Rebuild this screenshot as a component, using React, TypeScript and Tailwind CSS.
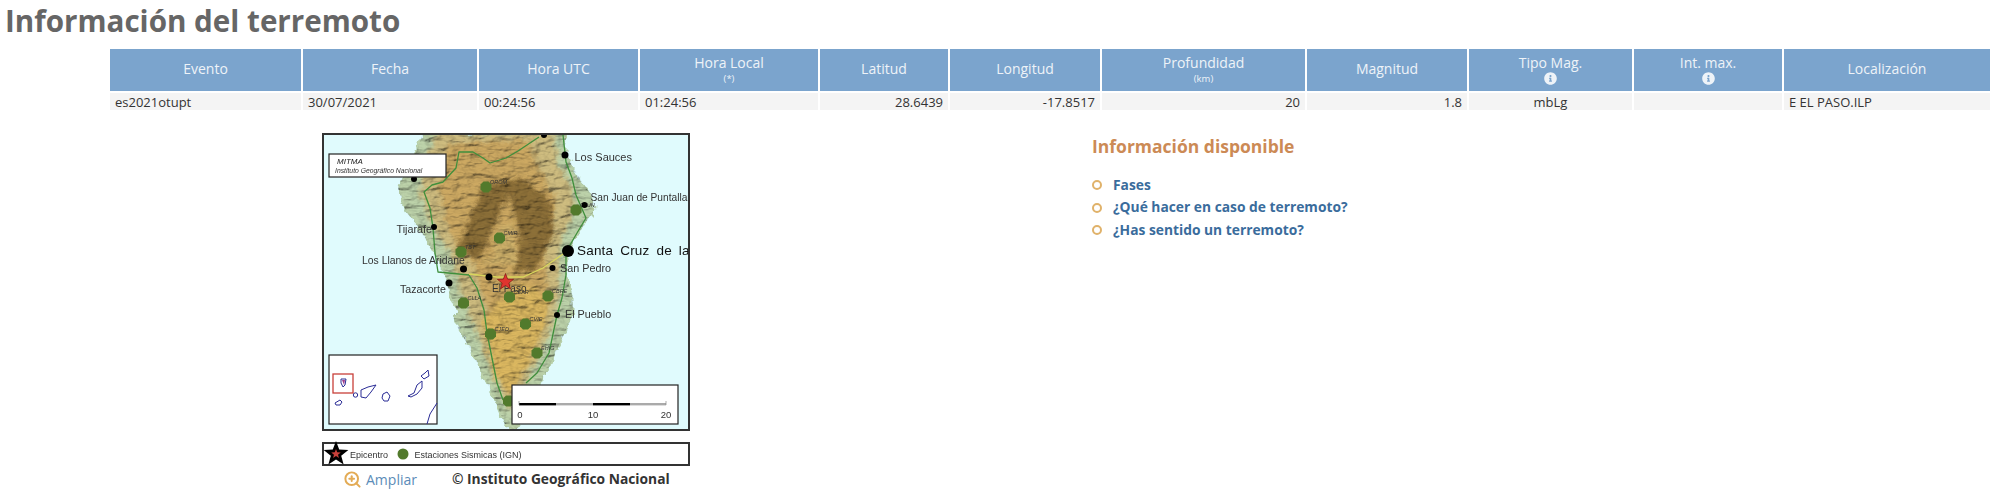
import { ZoomIn } from 'lucide-react';
import { FaInfoCircle } from 'react-icons/fa';

const columns = [
  { name: 'Evento', width: 'w-[192px]' },
  { name: 'Fecha', width: 'w-[176px]' },
  { name: 'Hora UTC', width: 'w-[161px]' },
  { name: 'Hora Local', sub: '(*)', width: 'w-[180px]' },
  { name: 'Latitud', width: 'w-[130px]' },
  { name: 'Longitud', width: 'w-[152px]' },
  { name: 'Profundidad', sub: '(km)', width: 'w-[205px]' },
  { name: 'Magnitud', width: 'w-[162px]' },
  { name: 'Tipo Mag.', info: true, width: 'w-[165px]' },
  { name: 'Int. max.', info: true, width: 'w-[150px]' },
  { name: 'Localización', width: 'w-[207px]' },
];

const row = [
  { value: 'es2021otupt', align: 'text-left' },
  { value: '30/07/2021', align: 'text-left' },
  { value: '00:24:56', align: 'text-left' },
  { value: '01:24:56', align: 'text-left' },
  { value: '28.6439', align: 'text-right' },
  { value: '-17.8517', align: 'text-right' },
  { value: '20', align: 'text-right' },
  { value: '1.8', align: 'text-right' },
  { value: 'mbLg', align: 'text-center' },
  { value: '', align: 'text-center' },
  { value: 'E EL PASO.ILP', align: 'text-left' },
];

const links = ['Fases', '¿Qué hacer en caso de terremoto?', '¿Has sentido un terremoto?'];

const towns = [
  { x: 222, y: 2, r: 3 },
  { x: 243, y: 22, r: 3.5 },
  { x: 262.5, y: 72, r: 3 },
  { x: 92, y: 46, r: 3 },
  { x: 112, y: 94, r: 3 },
  { x: 246, y: 118, r: 6 },
  { x: 230.5, y: 135, r: 3 },
  { x: 141.5, y: 136, r: 3.5 },
  { x: 167, y: 144, r: 3.5 },
  { x: 127, y: 150, r: 3.5 },
  { x: 235, y: 182, r: 3 },
];

const stations = [
  { x: 164, y: 54, label: 'OROM' },
  { x: 254, y: 77, label: 'CJUN' },
  { x: 177.5, y: 105, label: 'CMIR' },
  { x: 139, y: 119, label: 'TBT' },
  { x: 187.5, y: 164, label: 'CEAR' },
  { x: 226, y: 163, label: 'CBRE' },
  { x: 141.5, y: 170, label: 'CLLA' },
  { x: 203.5, y: 191, label: 'CVIE' },
  { x: 168.5, y: 201, label: 'CJED' },
  { x: 215, y: 220, label: 'EHIG' },
  { x: 186.5, y: 268, label: '' },
];

const labels = [
  { x: 252.5, y: 28, text: 'Los Sauces', size: 11 },
  { x: 268.5, y: 68, text: 'San Juan de Puntallana', size: 10.2 },
  { x: 74.5, y: 100, text: 'Tijarafe', size: 10.8 },
  { x: 40, y: 131, text: 'Los Llanos de Aridane', size: 10.4 },
  { x: 78, y: 160, text: 'Tazacorte', size: 10.6 },
  { x: 170, y: 159, text: 'El Paso', size: 10 },
  { x: 238, y: 139, text: 'San Pedro', size: 10.8 },
  { x: 243, y: 185, text: 'El Pueblo', size: 10.8 },
];

const island =
  'M101 0 L94 19 L84 35 L76 55 L84 79 L97 95 L111 119 L121 135 L127 159 L136 179 L131 184 L137 197 L147 214 L157 234 L167 254 L177 277 L184 294 L194 297 L201 287 L211 264 L227 234 L244 197 L251 180 L251 165 L244 142 L244 125 L251 109 L264 89 L274 75 L267 59 L251 35 L244 19 L244 0 Z';

function Star({ cx, cy, r, fill, stroke }: { cx: number; cy: number; r: number; fill: string; stroke?: string }) {
  const points = Array.from({ length: 10 }, (_, i) => {
    const radius = i % 2 === 0 ? r : r * 0.42;
    const angle = (Math.PI / 5) * i - Math.PI / 2;
    return `${cx + radius * Math.cos(angle)},${cy + radius * Math.sin(angle)}`;
  }).join(' ');
  return <polygon points={points} fill={fill} stroke={stroke} strokeWidth={stroke ? 0.7 : 0} />;
}

function SeismicMap() {
  return (
    <svg viewBox="2 2 364 294" className="block h-[298px] w-[368px] border-2 border-[#333] blur-[0.35px]" style={{ fontFamily: 'Liberation Sans, sans-serif' }}>
      <defs>
        <filter id="rough" x="-5%" y="-5%" width="110%" height="110%">
          <feTurbulence type="fractalNoise" baseFrequency="0.12" numOctaves="3" seed="4" />
          <feDisplacementMap in="SourceGraphic" scale="9" xChannelSelector="R" yChannelSelector="G" />
        </filter>
        <filter id="relief" x="0" y="0" width="100%" height="100%">
          <feTurbulence type="fractalNoise" baseFrequency="0.06 0.16" numOctaves="4" seed="9" result="noise" />
          <feDiffuseLighting in="noise" surfaceScale="9" lightingColor="#ffffff" result="light">
            <feDistantLight azimuth="225" elevation="60" />
          </feDiffuseLighting>
          <feComposite in="light" in2="SourceAlpha" operator="in" />
        </filter>
        <filter id="soft">
          <feGaussianBlur stdDeviation="2" />
        </filter>
        <clipPath id="land">
          <path d={island} />
        </clipPath>
      </defs>
      <rect width="368" height="298" fill="#e0fbfd" />
      <g filter="url(#rough)">
        <path d={island} fill="#bdd3aa" stroke="#b0cba6" strokeWidth="1" />
        <g clipPath="url(#land)">
          <path d="M112 0 L104 30 L98 60 L110 92 L130 125 L140 165 L155 200 L172 245 L188 280 L198 262 L215 225 L232 190 L238 150 L236 115 L250 85 L252 60 L236 30 L232 0 Z" fill="#cfbd80" filter="url(#soft)" />
          <path d="M125 12 L116 58 L130 105 L150 130 L165 170 L180 230 L195 240 L215 195 L225 150 L222 105 L235 70 L215 30 L205 6 Z" fill="#cda962" filter="url(#soft)" />
          <path d="M164 50 L147 85 L135 118 L160 126 L172 92 L188 60 L198 105 L192 140 L214 135 L232 100 L228 68 L200 45 Z" fill="#8d6f38" filter="url(#soft)" />
          <path d="M158 130 L196 132 L190 90 L178 95 L168 126 Z" fill="#d0b26a" filter="url(#soft)" />
          <path d="M160 185 L172 240 L188 262 L205 232 L222 195 L228 165 L200 150 Z" fill="#dcb860" filter="url(#soft)" />
        </g>
      </g>
      <path d={island} filter="url(#relief)" opacity="0.45" style={{ mixBlendMode: 'multiply' }} />
      <g fill="none" stroke="#3f8f3c" strokeWidth="1.3" strokeLinejoin="round">
        <path d="M217 4 L196 18 L184 25 L168 30 L161 25 L151 19 L137 19 L134 35 L121 49 L110 52 L102 59 L108 75 L111 95 L113 120 L116 139 L147 142 L155 155 L162 177 L165 200 L169 220 L175 250 L181 267" />
        <path d="M241 2 L244 29 L250 45 L254 62 L264 85 L255 100 L244 119 L244 142 L240 165 L235 182 L227 220 L215 240 L204 250" />
      </g>
      <path d="M147 141 L175 144 L201 144 L221 135 L244 119" fill="none" stroke="#d9d65c" strokeWidth="1.3" />
      {stations.map((s) => (
        <g key={`${s.x}-${s.y}`}>
          <polygon
            points={`${s.x - 5.5},${s.y - 2.5} ${s.x - 2.5},${s.y - 5.5} ${s.x + 2.5},${s.y - 5.5} ${s.x + 5.5},${s.y - 2.5} ${s.x + 5.5},${s.y + 2.5} ${s.x + 2.5},${s.y + 5.5} ${s.x - 2.5},${s.y + 5.5} ${s.x - 5.5},${s.y + 2.5}`}
            fill="#527a2c"
          />
          <text x={s.x + 4} y={s.y - 3} fontSize="5.5" fontStyle="italic" fill="#333">
            {s.label}
          </text>
        </g>
      ))}
      {towns.map((t) => (
        <circle key={`${t.x}-${t.y}`} cx={t.x} cy={t.y} r={t.r} fill="#000" />
      ))}
      {labels.map((l) => (
        <text key={l.text} x={l.x} y={l.y} fontSize={l.size} fill="#333">
          {l.text}
        </text>
      ))}
      <text x="255" y="122" fontSize="13.5" wordSpacing="3" letterSpacing="0.2" fill="#111">
        Santa Cruz de la Palma
      </text>
      <Star cx={183.5} cy={149} r={8.5} fill="#e0342f" stroke="#7a1512" />

      <rect x="7" y="21" width="117" height="23" fill="#fff" stroke="#222" strokeWidth="1.2" />
      <text x="15" y="31" fontSize="8" fontStyle="italic" fill="#222">MITMA</text>
      <text x="13" y="40" fontSize="6.8" fontStyle="italic" fill="#333">Instituto Geográfico Nacional</text>

      <rect x="7" y="222" width="108" height="69" fill="#fff" stroke="#222" strokeWidth="1.2" />
      <rect x="11" y="241" width="20" height="19" fill="none" stroke="#c8403a" strokeWidth="1.3" />
      <g fill="none" stroke="#2a2c96" strokeWidth="1">
        <path d="M19 246 L24 246 L23 252 L21 254 L19 250 Z" />
        <path d="M13 270 L18 267 L20 269 L18 272 L14 272 Z" />
        <circle cx="33.5" cy="262" r="2.2" />
        <path d="M39 257 L46 254 L54 252 L49 259 L44 265 L39 264 Z" />
        <path d="M61 261 L65 259 L68 263 L66 268 L62 268 L60 265 Z" />
        <path d="M86 263 L92 260 L95 252 L100 248 L100 255 L95 261 L89 264 Z" />
        <path d="M99 243 L103 240 L106 237 L107 243 L102 246 Z" />
        <path d="M105 291 L108 281 L115 270" />
      </g>
      <path d="M20 247 L23 247 L22 252 Z" fill="#a0408e" />

      <rect x="190" y="252" width="166" height="39" fill="#fff" stroke="#222" strokeWidth="1.2" />
      <rect x="197" y="270" width="37" height="2.4" fill="#000" />
      <rect x="234" y="270" width="37" height="2.4" fill="#aaa" />
      <rect x="271" y="270" width="37" height="2.4" fill="#000" />
      <rect x="308" y="270" width="36" height="2.4" fill="#aaa" />
      <path d="M197 268 V272 M344 268 V272" stroke="#888" strokeWidth="0.7" />
      <text x="197" y="285" fontSize="9.5" textAnchor="middle" fill="#333" dx="1">0</text>
      <text x="271" y="285" fontSize="9.5" textAnchor="middle" fill="#333">10</text>
      <text x="344" y="285" fontSize="9.5" textAnchor="middle" fill="#333">20</text>
    </svg>
  );
}

function MapLegend() {
  return (
    <svg viewBox="2 2 364 20" className="block h-6 w-[368px] overflow-visible border-2 border-[#333] blur-[0.35px]" style={{ fontFamily: 'Liberation Sans, sans-serif' }}>
      <Star cx={14} cy={12} r={13} fill="#000" />
      <Star cx={14} cy={12} r={5} fill="#c8403a" />
      <text x="28" y="15.5" fontSize="9" fill="#333">Epicentro</text>
      <circle cx="81" cy="12" r="5.5" fill="#527a2c" />
      <text x="92.5" y="15.5" fontSize="9" fill="#333">Estaciones Sismicas (IGN)</text>
    </svg>
  );
}

export default function App() {
  return (
    <div className="h-[493px] w-[2000px] overflow-hidden bg-white font-['Open_Sans',sans-serif]">
      <h1 className="h-[49px] pl-[5px] pt-[2px] text-[29.6px] font-bold leading-[38px] text-[#666]">Información del terremoto</h1>

      <table className="ml-[110px] w-[1880px] table-fixed border-collapse">
        <colgroup>
          {columns.map((col) => (
            <col key={col.name} className={col.width} />
          ))}
        </colgroup>
        <thead>
          <tr className="h-[43px] bg-[#7ba4cd] text-[#eef3f8]">
            {columns.map((col) => (
              <th key={col.name} className="border-l-2 border-white p-0 pb-[2px] text-center align-middle font-normal first:border-l-0">
                <div className="text-[14px] leading-[18px]">{col.name}</div>
                {col.sub && <div className="text-[9.5px] leading-[13px]">{col.sub}</div>}
                {col.info && <FaInfoCircle className="mx-auto text-[13px]" />}
              </th>
            ))}
          </tr>
        </thead>
        <tbody>
          <tr className="h-[18px] border-t-2 border-white bg-[#f4f4f4] text-[13px] leading-[16px] text-[#333]">
            {row.map((cell, i) => (
              <td key={columns[i].name} className={`border-l-2 border-white px-[5px] pb-0 pt-[1px] first:border-l-0 ${cell.align}`}>
                {cell.value}
              </td>
            ))}
          </tr>
        </tbody>
      </table>

      <div className="flex pl-[322px] pt-[23px]">
        <div className="w-[368px]">
          <SeismicMap />
          <div className="mt-[11px]">
            <MapLegend />
          </div>
          <div className="mt-[3px] flex h-5 items-center">
            <ZoomIn className="ml-[21px] h-[19px] w-[19px] text-[#e3ab55]" strokeWidth={2.5} />
            <span className="ml-[4px] text-[14px] text-[#5b8cb8]">Ampliar</span>
            <span className="ml-[35px] text-[13.8px] font-bold text-[#333]">© Instituto Geográfico Nacional</span>
          </div>
        </div>

        <div className="ml-[402px]">
          <h2 className="mt-[1px] text-[17.5px] font-bold leading-[25px] text-[#cc8a55]">Información disponible</h2>
          <ul className="mt-[15px]">
            {links.map((link) => (
              <li key={link} className="flex h-[22.5px] items-center text-[13.8px] font-bold text-[#3a6c9c]">
                <span className="mr-[11px] h-[10px] w-[10px] rounded-full border-2 border-[#e0b26a]" />
                {link}
              </li>
            ))}
          </ul>
        </div>
      </div>
    </div>
  );
}
